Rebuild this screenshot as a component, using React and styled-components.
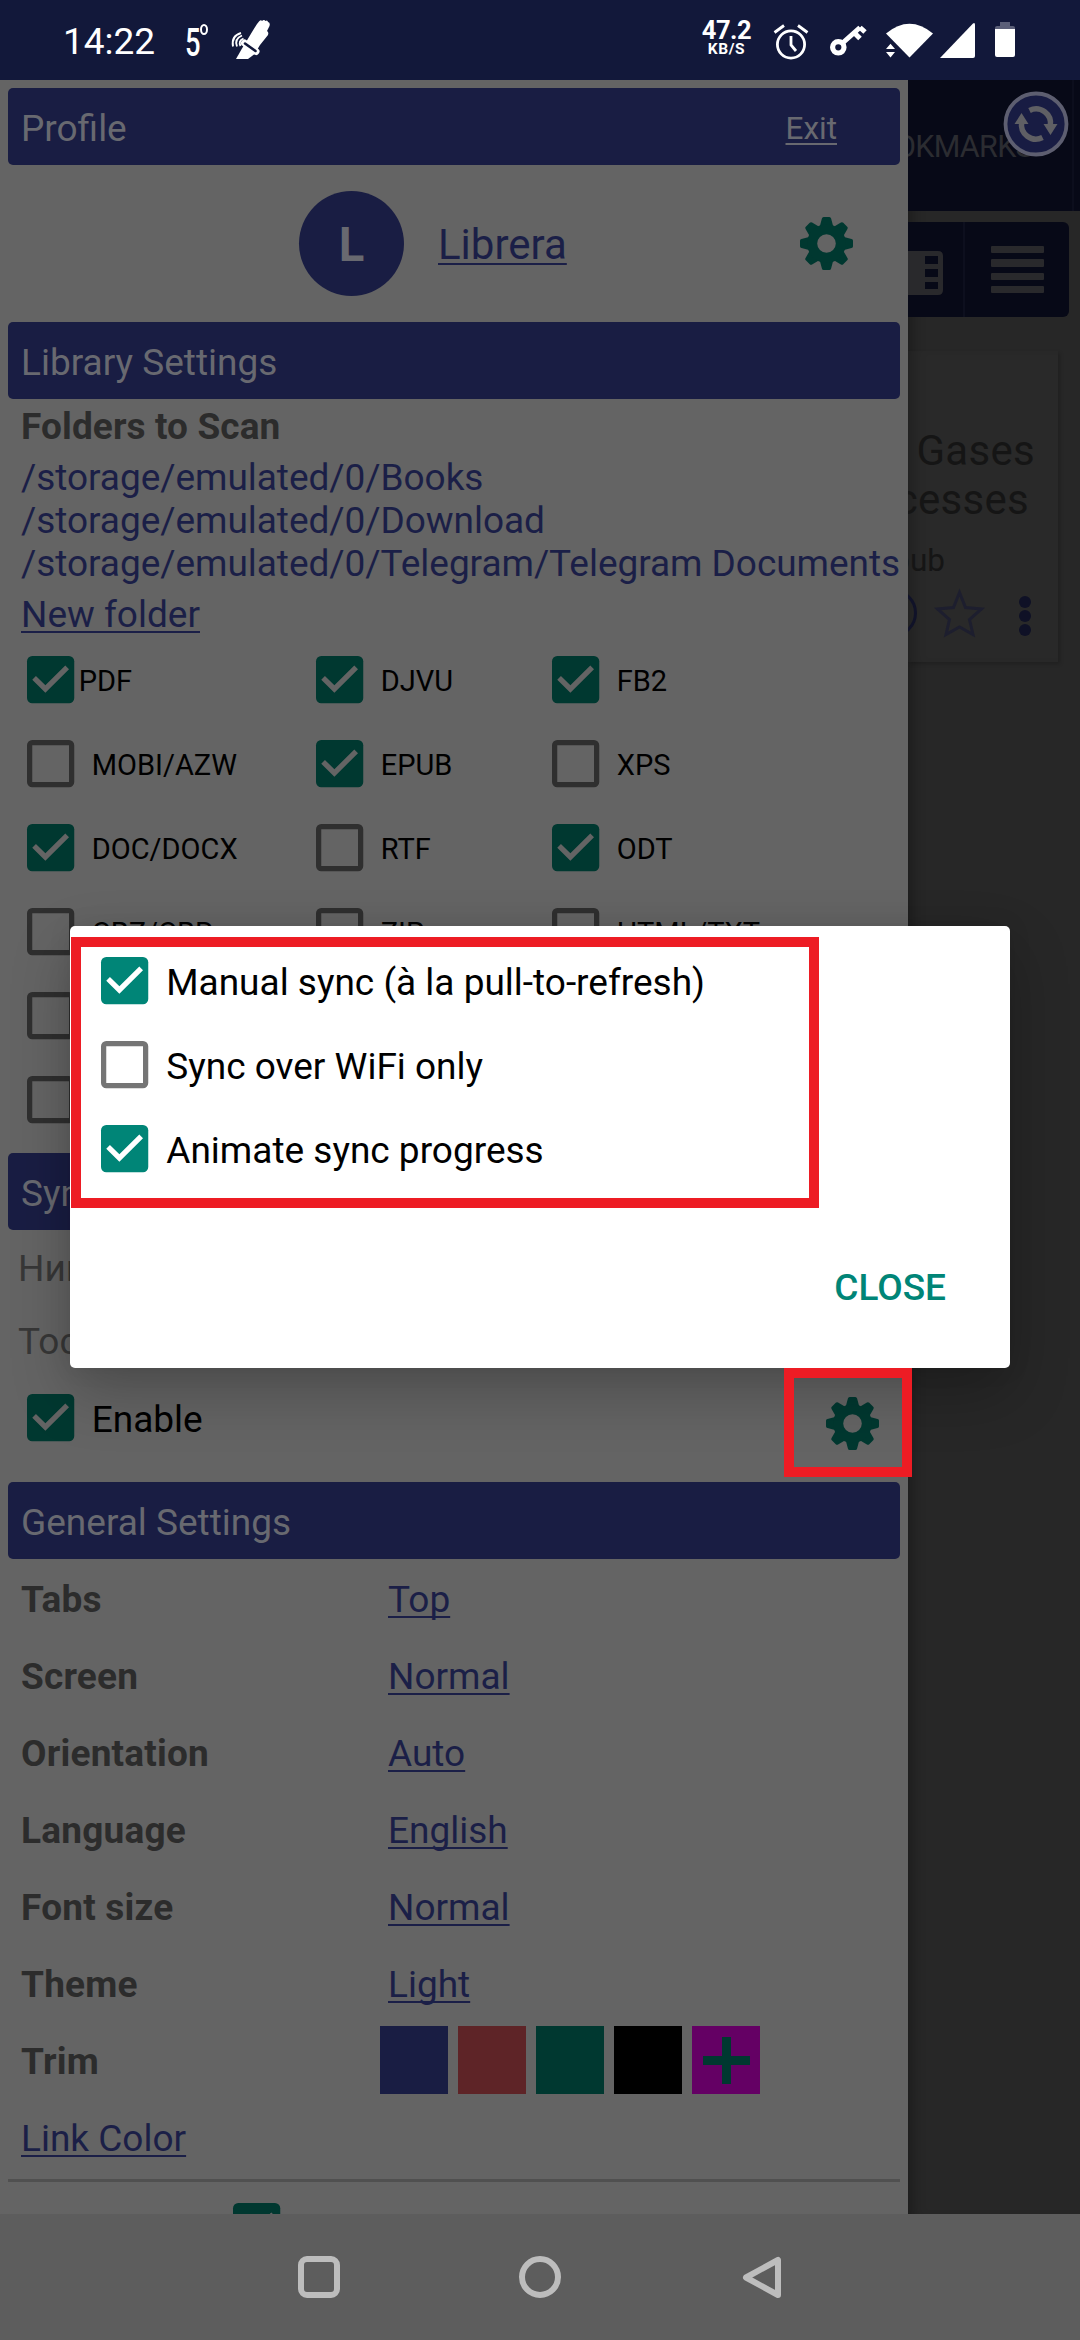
import React from "react";
import styled, { createGlobalStyle } from "styled-components";

const GlobalStyle = createGlobalStyle`
  *, *::before, *::after { box-sizing: border-box; }
  body { margin: 0; background: #646464; }
`;

const c = {
  status: "#12183a",
  panel: "#646464",
  bar: "#191d43",
  barText: "#686970",
  link: "#1b1f47",
  heading: "#2c2c2c",
  muted: "#373737",
  teal: "#008577",
  tealDim: "#003830",
  red: "#ed1c24",
};

const Screen = styled.div`
  width: 1080px;
  height: 2340px;
  display: flex;
  flex-direction: column;
  overflow: hidden;
  position: relative;
  font-family: Roboto, "Noto Sans", sans-serif;
  font-size: 37px;
  line-height: 43px;
  color: #000;
`;

/* ---------- status bar ---------- */
const StatusBar = styled.header`
  height: 80px;
  flex: none;
  display: flex;
  align-items: flex-start;
  background: ${c.status};
  color: #fff;
  padding: 20px 65px 0 63px;
`;
const Clock = styled.div`
  font-size: 37px;
  line-height: 43px;
  width: 122px;
`;
const Temperature = styled.div`
  width: 47px;
  display: flex;
  font-size: 38px;
  line-height: 44px;
  padding-top: 1px;
`;
const TempDigit = styled.span`
  display: block;
  width: 15px;
  transform: scaleX(0.72);
  transform-origin: 0 0;
  font-weight: 500;
`;
const Degree = styled.span`
  width: 8px;
  height: 11px;
  border: 2.5px solid #fff;
  border-radius: 50%;
  margin-top: 3px;
`;
const Spacer = styled.div`
  flex: 1;
`;
const NetSpeed = styled.div`
  width: 49px;
  margin-right: 22px;
  display: flex;
  flex-direction: column;
  align-items: center;
  font-weight: 700;
`;
const SpeedValue = styled.div`
  font-size: 25.5px;
  line-height: 21px;
  letter-spacing: -0.4px;
  white-space: nowrap;
`;
const SpeedUnit = styled.div`
  font-size: 15.5px;
  line-height: 14px;
  padding-top: 1px;
  letter-spacing: 0.6px;
`;
const Icon = styled.svg`
  flex: none;
  display: block;
  overflow: visible;
  margin-top: ${(p) => p.$top || 0}px;
  margin-right: ${(p) => p.$gap || 0}px;
`;

/* ---------- main stage ---------- */
const Stage = styled.main`
  flex: 1;
  min-height: 0;
  display: flex;
  overflow: hidden;
`;
const Drawer = styled.aside`
  width: 908px;
  flex: none;
  background: ${c.panel};
  padding: 8px 8px 0;
  overflow: hidden;
`;
const SectionBar = styled.div`
  height: 77px;
  display: flex;
  align-items: center;
  justify-content: space-between;
  padding: 4px 63px 0 13px;
  border-radius: 5px;
  background: ${c.bar};
  color: ${c.barText};
  margin-top: ${(p) => p.$gap || 0}px;
`;
const Link = styled.a`
  color: ${(p) => p.$color || c.link};
  font-size: ${(p) => p.$size || 37}px;
  text-decoration: underline;
  text-decoration-thickness: 2px;
  text-underline-offset: 4px;
  text-decoration-skip-ink: none;
`;
const ProfileRow = styled.div`
  height: 157px;
  display: flex;
  align-items: center;
  padding: 0 47px 0 291px;
`;
const Avatar = styled.div`
  width: 105px;
  height: 105px;
  border-radius: 50%;
  background: ${c.bar};
  color: ${c.barText};
  display: flex;
  align-items: center;
  justify-content: center;
  padding-top: 4px;
  font-size: 47.25px;
  font-weight: 700;
`;
const ProfileName = styled.div`
  flex: 1;
  padding: 4px 0 0 34px;
`;
const Folders = styled.div`
  padding: 6px 0 0 13px;
  height: 239px;
`;
const FoldersTitle = styled.div`
  font-weight: 700;
  letter-spacing: 0.1px;
  color: ${c.heading};
  margin-bottom: 8px;
`;
const FolderPath = styled.div`
  color: ${c.link};
  letter-spacing: -0.04px;
  white-space: nowrap;
`;
const NewFolder = styled.div`
  margin-top: 8px;
`;
const Formats = styled.div`
  display: grid;
  grid-template-columns: 289px 236px 1fr;
  grid-auto-rows: 84px;
  padding-left: 18.5px;
`;
const CheckItem = styled.label`
  display: flex;
  align-items: center;
  height: 84px;
  gap: ${(p) => p.$gap ?? 18}px;
  font-size: ${(p) => p.$size || 37}px;
`;
const CheckText = styled.span`
  padding-top: 3px;
  white-space: nowrap;
`;
const Hints = styled.div`
  height: 146px;
  padding: 17px 0 0 10px;
  color: ${c.muted};
  line-height: 43px;
`;
const Hint = styled.div`
  height: 73px;
`;
const EnableRow = styled.div`
  height: 106px;
  display: flex;
  align-items: flex-start;
  justify-content: space-between;
  padding: 0 21px 0 18.5px;
`;
const GearSlot = styled.div`
  padding-top: 21px;
`;
const SettingRow = styled.div`
  height: 77px;
  display: grid;
  grid-template-columns: 367px 1fr;
  align-items: center;
  padding: 3px 0 0 13px;
`;
const SettingName = styled.div`
  font-weight: 700;
  letter-spacing: 0.2px;
  color: ${c.heading};
`;
const Swatches = styled.div`
  display: flex;
  gap: 10px;
  margin: 0 0 2px -8px;
`;
const Swatch = styled.div`
  width: 68px;
  height: 68px;
  background: ${(p) => p.$color};
  display: flex;
  align-items: center;
  justify-content: center;
`;
const Divider = styled.hr`
  height: 3px;
  border: 0;
  margin: 4px 0 0;
  background: #505050;
`;
const BrightnessRow = styled.div`
  display: flex;
  padding-top: 21px;
`;
const BrightnessLabel = styled.div`
  width: 224.5px;
  padding: 5px 0 0 13px;
  font-weight: 700;
  color: ${c.heading};
`;

/* ---------- page behind the drawer ---------- */
const Behind = styled.section`
  flex: 1;
  min-width: 0;
  background: #272727;
  box-shadow: inset 14px 0 14px -10px rgba(0, 0, 0, 0.3);
  overflow: hidden;
`;
const Tabs = styled.div`
  height: 131px;
  background: #070917;
  color: #2b2c31;
  display: flex;
  justify-content: flex-end;
  font-size: 30.5px;
  letter-spacing: -0.7px;
  line-height: 37px;
`;
const TabLabel = styled.div`
  width: 166px;
  border-right: 2px solid #0c0e1d;
  display: flex;
  justify-content: flex-end;
  align-items: flex-start;
  padding: 48px 39px 0 0;
`;
const TabEdge = styled.div`
  width: 6px;
`;
const ToolRow = styled.div`
  margin: 11px 11px 0 0;
  height: 95px;
  display: flex;
  border-radius: 0 6px 6px 0;
  background: #070917;
`;
const GridTool = styled.div`
  width: 57px;
  border-right: 2px solid #0d0f1e;
  padding-top: 29px;
`;
const ListTool = styled.div`
  flex: 1;
  display: flex;
  flex-direction: column;
  align-items: center;
  gap: 6px;
  padding-top: 24px;
`;
const ListLine = styled.div`
  width: 53px;
  height: 7.3px;
  border-radius: 1px;
  background: #29292c;
`;
const BookCard = styled.article`
  margin: 34px 22px 0 0;
  height: 311px;
  background: #292929;
  box-shadow: 2px 2px 4px rgba(0, 0, 0, 0.2), inset 14px 0 14px -10px rgba(0, 0, 0, 0.25);
  display: flex;
  flex-direction: column;
  align-items: flex-end;
  color: #151515;
  padding-top: 75px;
`;
const BookTitle = styled.div`
  font-size: 42px;
  line-height: 49px;
  letter-spacing: 0.3px;
  padding-right: ${(p) => p.$right}px;
  white-space: nowrap;
`;
const BookFile = styled.div`
  font-size: 31.5px;
  line-height: 37px;
  padding: 18px 113px 0 0;
  white-space: nowrap;
`;
const BookActions = styled.div`
  width: 150px;
  height: 60px;
  margin-top: 3px;
`;

/* ---------- overlays ---------- */
const Dialog = styled.div`
  position: absolute;
  left: 70px;
  top: 926px;
  width: 940px;
  height: 442px;
  border-radius: 5px;
  background: #fff;
  padding: 13px 64px 0 31px;
  box-shadow: 0 24px 60px rgba(0, 0, 0, 0.24), 0 0 24px rgba(0, 0, 0, 0.08);
`;
const DialogActions = styled.div`
  display: flex;
  justify-content: flex-end;
  padding-top: 75px;
`;
const CloseButton = styled.button`
  border: 0;
  padding: 0;
  background: none;
  font: 500 37px/43px Roboto, sans-serif;
  color: ${c.teal};
`;
const Highlight = styled.div`
  position: absolute;
  left: ${(p) => p.$x}px;
  top: ${(p) => p.$y}px;
  width: ${(p) => p.$w}px;
  height: ${(p) => p.$h}px;
  border: 10px solid ${c.red};
`;
const SyncBadge = styled.div`
  position: absolute;
  left: 1003px;
  top: 91px;
  width: 66px;
  height: 66px;
`;

/* ---------- nav bar ---------- */
const NavBar = styled.nav`
  height: 126px;
  flex: none;
  background: #5d5d5d;
  display: flex;
  justify-content: center;
  gap: 179px;
  padding-top: 42px;
`;
const NavShape = styled.div`
  width: 42px;
  height: 42px;
  border: 6px solid #bdbdbd;
  border-radius: ${(p) => p.$radius};
`;

function Checkbox({ checked, bright }) {
  return (
    <Icon width="47.25" height="47.25" viewBox="0 0 18 18">
      {checked ? (
        <>
          <rect width="18" height="18" rx="2" fill={bright ? c.teal : c.tealDim} />
          <path
            d="M7 14L2 9l1.41-1.41L7 11.17l7.59-7.59L16 5l-9 9z"
            fill={bright ? "#fff" : "#646464"}
          />
        </>
      ) : (
        <rect
          x="1" y="1" width="16" height="16" rx="1" fill="none" strokeWidth="2"
          stroke={bright ? "#757575" : "#2f2f2f"}
        />
      )}
    </Icon>
  );
}

function Check({ label, checked, bright, size, gap }) {
  return (
    <CheckItem $size={size} $gap={gap}>
      <Checkbox checked={checked} bright={bright} />
      {label && <CheckText>{label}</CheckText>}
    </CheckItem>
  );
}

const TEETH = [0, 45, 90, 135, 180, 225, 270, 315];

function Gear() {
  return (
    <Icon width="53" height="53" viewBox="-26.5 -26.5 53 53">
      <g fill={c.tealDim}>
        {TEETH.map((a) => (
          <path
            key={a}
            transform={`rotate(${a})`}
            d="M-6.6-17.5L-4.6-25Q-4.3-26.5-2.8-26.5H2.8Q4.3-26.5 4.6-25L6.6-17.5Z"
          />
        ))}
      </g>
      <circle r="14.3" fill="none" stroke={c.tealDim} strokeWidth="10" />
    </Icon>
  );
}

const FORMATS = [
  ["PDF", true], ["DJVU", true], ["FB2", true],
  ["MOBI/AZW", false], ["EPUB", true], ["XPS", false],
  ["DOC/DOCX", true], ["RTF", false], ["ODT", true],
  ["CBZ/CBR", false], ["ZIP", false], ["HTML/TXT", false],
  ["", false], ["", false], ["", false],
  ["", false], ["", false], ["", false],
];

const SETTINGS = [
  ["Tabs", "Top"],
  ["Screen", "Normal"],
  ["Orientation", "Auto"],
  ["Language", "English"],
  ["Font size", "Normal"],
  ["Theme", "Light"],
];

export default function App() {
  return (
    <Screen>
      <GlobalStyle />
      <StatusBar>
        <Clock>14:22</Clock>
        <Temperature>
          <TempDigit>5</TempDigit>
          <Degree />
        </Temperature>
        <Icon width="38" height="40" viewBox="232 20 38 40">
          <path d="M236 59L244 45L256 53L248 59Z" fill="#fff" />
          <path
            d="M246 42L252 32L257 24L259 21.5Q261 19.5 262 21Q264 19 265.5 21Q267.5 19.500 268 22Q270.500 22.500 269.500 26L267 31Q269 32 268 35L260 45L257 50Z"
            fill="#fff"
          />
          <path d="M244.500 43L256 51.500" stroke="#fff" strokeWidth="7" strokeLinecap="round" />
          <path d="M245 43.500L255.500 51" stroke={c.status} strokeWidth="2.600" strokeLinecap="round" />
          <path
            d="M240.500 46Q238 41 243.500 38.500M237 46.500Q234 39 242 35.500M233 46.500Q231 36 241 33"
            stroke="#fff" strokeWidth="1.900" fill="none"
          />
        </Icon>
        <Spacer />
        <NetSpeed>
          <SpeedValue>47.2</SpeedValue>
          <SpeedUnit>KB/S</SpeedUnit>
        </NetSpeed>
        <Icon width="36" height="36" viewBox="0 0 36 36" $top={4} $gap={21}>
          <g fill="none" stroke="#fff" strokeWidth="2.800">
            <circle cx="18" cy="20.500" r="13.600" />
            <path d="M1.500 8.500L11 1.500M34.500 8.500L25 1.500M18 12v9l5 6" />
          </g>
        </Icon>
        <Icon width="36" height="32" viewBox="0 0 36 32" $top={4} $gap={20}>
          <circle cx="8.300" cy="23.300" r="5.700" fill="none" stroke="#fff" strokeWidth="5.200" />
          <path
            d="M12 19.500L30 3.500M24 8.500L30 14.500M30 3.500L35 8"
            stroke="#fff" strokeWidth="5" fill="none"
          />
        </Icon>
        <Icon width="47" height="35" viewBox="0 0 47 35" $top={3} $gap={7}>
          <path d="M0 10.500Q23.500-9 47 10.500L23.500 34.500Z" fill="#fff" />
          <path d="M0 20V35H10V26Z" fill={c.status} />
          <path d="M0 26L4.500 20.800L9 26ZM0 29L4.500 34.500L9 29Z" fill="#fff" />
        </Icon>
        <Icon width="35" height="35" viewBox="0 0 35 35" $top={3} $gap={20}>
          <path d="M0 35L33 .5Q35-1 35 2V33Q35 35 33 35Z" fill="#fff" />
        </Icon>
        <Icon width="20" height="35" viewBox="0 0 20 35" $top={2}>
          <path d="M5 0H15V4H18Q20 4 20 6V8H0V6Q0 4 2 4H5Z" fill="#5b5f78" />
          <path d="M0 7H20V33Q20 35 18 35H2Q0 35 0 33Z" fill="#fff" />
        </Icon>
      </StatusBar>

      <Stage>
        <Drawer>
          <SectionBar>
            Profile
            <Link $color={c.barText} $size={31.5}>Exit</Link>
          </SectionBar>
          <ProfileRow>
            <Avatar>L</Avatar>
            <ProfileName><Link $size={42}>Librera</Link></ProfileName>
            <Gear />
          </ProfileRow>

          <SectionBar>Library Settings</SectionBar>
          <Folders>
            <FoldersTitle>Folders to Scan</FoldersTitle>
            <FolderPath>/storage/emulated/0/Books</FolderPath>
            <FolderPath>/storage/emulated/0/Download</FolderPath>
            <FolderPath>/storage/emulated/0/Telegram/Telegram Documents</FolderPath>
            <NewFolder><Link>New folder</Link></NewFolder>
          </Folders>
          <Formats>
            {FORMATS.map(([label, on], i) => (
              <Check key={i} label={label} checked={on} size={29} gap={i ? 18 : 5} />
            ))}
          </Formats>

          <SectionBar $gap={11}>Sync</SectionBar>
          <Hints>
            <Hint>Ник</Hint>
            <Hint>Тос</Hint>
          </Hints>
          <EnableRow>
            <Check label="Enable" checked />
            <GearSlot><Gear /></GearSlot>
          </EnableRow>

          <SectionBar>General Settings</SectionBar>
          {SETTINGS.map(([name, value]) => (
            <SettingRow key={name}>
              <SettingName>{name}</SettingName>
              <div><Link>{value}</Link></div>
            </SettingRow>
          ))}
          <SettingRow>
            <SettingName>Trim</SettingName>
            <Swatches>
              <Swatch $color="#191d43" />
              <Swatch $color="#5e2427" />
              <Swatch $color="#003830" />
              <Swatch $color="#000" />
              <Swatch $color="#640064">
                <svg width="47" height="47" viewBox="0 0 47 47">
                  <path d="M23.500 0V47M0 23.500H47" stroke={c.tealDim} strokeWidth="9" />
                </svg>
              </Swatch>
            </Swatches>
          </SettingRow>
          <SettingRow>
            <div><Link>Link Color</Link></div>
          </SettingRow>
          <Divider />
          <BrightnessRow>
            <BrightnessLabel>Brightness</BrightnessLabel>
            <Checkbox checked />
          </BrightnessRow>
        </Drawer>

        <Behind>
          <Tabs>
            <TabLabel>BOOKMARKS</TabLabel>
            <TabEdge />
          </Tabs>
          <ToolRow>
            <GridTool>
              <Icon width="35" height="44" viewBox="0 0 35 44">
                <path
                  fillRule="evenodd" fill="#29292c"
                  d="M0 0H30Q35 0 35 5V39Q35 44 30 44H0ZM17 5V13H30V5ZM17 18V26H30V18ZM17 31V38H30V31Z"
                />
              </Icon>
            </GridTool>
            <ListTool>
              <ListLine /><ListLine /><ListLine /><ListLine />
            </ListTool>
          </ToolRow>
          <BookCard>
            <BookTitle $right={23}>Gases</BookTitle>
            <BookTitle $right={29}>Processes</BookTitle>
            <BookFile>epub</BookFile>
            <BookActions>
              <svg width="150" height="60" viewBox="908 582 150 60">
                <circle cx="893" cy="613" r="22.500" fill="none" stroke="#101228" strokeWidth="3" />
                <path
                  d="M959.500 592.500L965.500 607.500L981.500 609L969.500 619.500L973 634.500L959.500 627L946 634.500L949.500 619.500L937.500 609L953.500 607.500Z"
                  fill="none" stroke="#1d1e2e" strokeWidth="3"
                />
                <g fill="#0f1126">
                  <circle cx="1025" cy="602" r="6" />
                  <circle cx="1025" cy="616" r="6" />
                  <circle cx="1025" cy="630" r="6" />
                </g>
              </svg>
            </BookActions>
          </BookCard>
        </Behind>
      </Stage>

      <NavBar>
        <NavShape $radius="9px" />
        <NavShape $radius="50%" />
        <svg width="42" height="43" viewBox="0 0 42 43">
          <path
            d="M38 4V39L6 21.500Z" fill="none" stroke="#bdbdbd"
            strokeWidth="6" strokeLinejoin="round"
          />
        </svg>
      </NavBar>

      <SyncBadge>
        <svg width="66" height="66" viewBox="-33 -33 66 66">
          <circle r="30.500" fill="#181c43" stroke="#5d5e70" strokeWidth="3.800" />
          <g fill="none" stroke="#5f5f64" strokeWidth="5.500">
            <path d="M-6.500-13.500A14.500 14.500 0 0 1 14.300 2" />
            <path d="M6.500 13.500A14.500 14.500 0 0 1-14.300-2" />
          </g>
          <path d="M7.500 0H21.500L14.500 11ZM-7.500 0H-21.500L-14.500-11Z" fill="#5f5f64" />
        </svg>
      </SyncBadge>

      <Dialog>
        <Check label="Manual sync (à la pull-to-refresh)" checked bright />
        <Check label="Sync over WiFi only" bright />
        <Check label="Animate sync progress" checked bright />
        <DialogActions>
          <CloseButton>CLOSE</CloseButton>
        </DialogActions>
      </Dialog>
      <Highlight $x={71} $y={937} $w={748} $h={271} />
      <Highlight $x={784} $y={1368} $w={128} $h={109} />
    </Screen>
  );
}
